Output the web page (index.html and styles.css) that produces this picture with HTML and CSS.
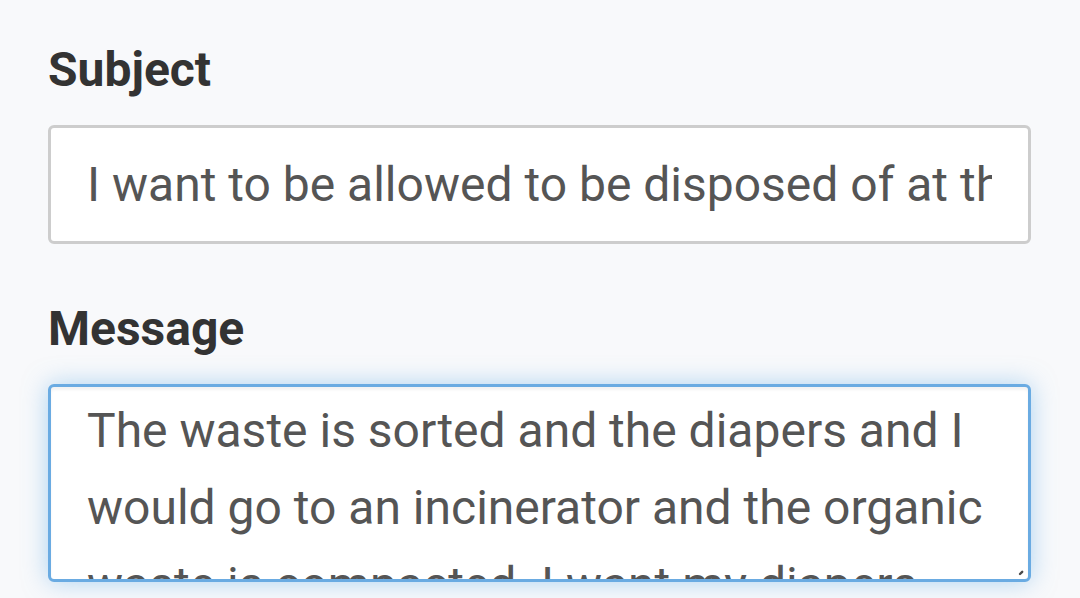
FILE: index.html
```html
<!DOCTYPE html>
<html lang="en">
<head>
<meta charset="utf-8">
<title>Contact form</title>
<link rel="stylesheet" href="styles.css">
</head>
<body>
<form class="form">
  <div class="group">
    <label class="label">Subject</label>
    <div class="field field-input"><span class="field-text">I want to be allowed to be disposed of at the incinerator</span></div>
  </div>
  <div class="group">
    <label class="label">Message</label>
    <div class="field field-area">
      <div class="area-text">The waste is sorted and the diapers and I would go to an incinerator and the organic waste is compacted. I want my diapers and myself to be burned.</div>
      <svg class="grip" width="6" height="6" viewBox="0 0 6 6"><path d="M4.2 1.8 L2 4" stroke="#4a4a4a" stroke-width="2.4" stroke-linecap="round"/></svg>
    </div>
  </div>
</form>
</body>
</html>
```

FILE: styles.css
```css
html, body {
  margin: 0;
  padding: 0;
  background: #f8f9fb;
  height: 100%;
  overflow: hidden;
}
body {
  font-family: Roboto, "Liberation Sans", sans-serif;
  font-size: 48px;
  color: #333;
}
.form {
  padding: 36px 49px 0 48px;
  display: flex;
  flex-direction: column;
  gap: 51px;
}
.group {
  display: flex;
  flex-direction: column;
}
.label {
  font-weight: 700;
  line-height: 68px;
  color: #333;
  margin-bottom: 21px;
}
.field {
  box-sizing: border-box;
  background: #fff;
  border-radius: 6px;
  color: #555;
}
.field-input {
  height: 119px;
  border: 3px solid #cdcdcd;
  padding: 0 36px;
  display: flex;
  align-items: center;
  overflow: hidden;
}
.field-text {
  white-space: nowrap;
  overflow: hidden;
  display: block;
  width: 100%;
  line-height: 60px;
}
.field-area {
  position: relative;
  height: 198px;
  border: 3px solid #6aabe2;
  padding: 6px 36px 0 36px;
  overflow: hidden;
  box-shadow: inset 0 3px 3px rgba(0,0,0,0.05), 0 0 24px rgba(102,175,233,0.5);
}
.area-text {
  line-height: 76.8px;
}
.grip {
  position: absolute;
  right: 4px;
  bottom: 3px;
}
```
